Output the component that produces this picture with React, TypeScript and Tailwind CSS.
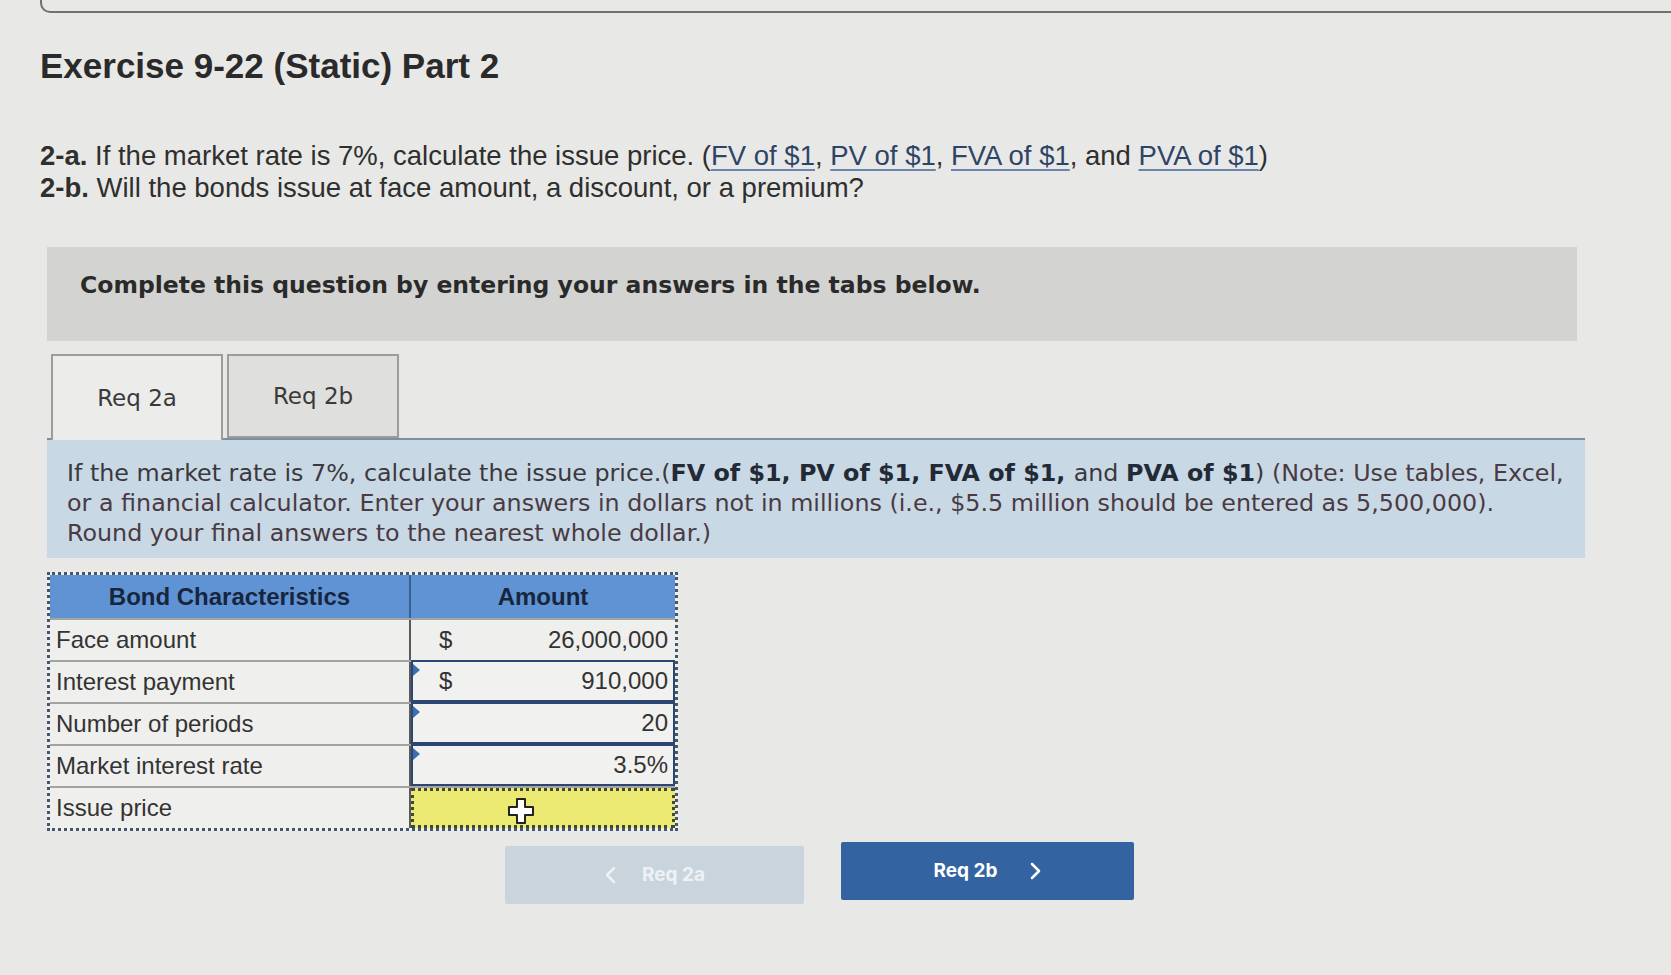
import React from "react";

const Marker = () => (
  <span className="absolute left-0 top-[2px] h-0 w-0 border-y-[6px] border-l-[7px] border-y-transparent border-l-[#3a6fb5]" />
);

const CursorPlus = () => (
  <svg
    width="28"
    height="28"
    viewBox="0 0 28 28"
    className="absolute left-[93px] top-[6px]"
  >
    <path
      d="M10 2h8v8h8v8h-8v8h-8v-8H2v-8h8z"
      fill="#ffffff"
      stroke="#222222"
      strokeWidth="2"
      strokeLinejoin="round"
    />
  </svg>
);

const rows = [
  { label: "Face amount", dollar: true, value: "26,000,000", kind: "plain" },
  { label: "Interest payment", dollar: true, value: "910,000", kind: "input" },
  { label: "Number of periods", dollar: false, value: "20", kind: "input" },
  { label: "Market interest rate", dollar: false, value: "3.5%", kind: "input" },
];

export default function App() {
  return (
    <div className="min-h-screen w-full overflow-hidden bg-[#e8e8e6] pl-[40px] font-['Liberation_Sans',Arial,sans-serif] text-[#333]">
      {/* bottom edge of the previous panel */}
      <div className="-mr-[40px] h-[13px] rounded-bl-[10px] border-b-2 border-l-2 border-[#707070]" />

      <h1 className="mt-[33px] text-[35px] font-bold leading-[40px] text-[#2a2a2a]">
        Exercise 9-22 (Static) Part 2
      </h1>

      <div className="mt-[54px] text-[27.5px] leading-[32px] text-[#2f2f2f]">
        <p className="whitespace-nowrap">
          <span className="font-bold">2-a.</span> If the market rate is 7%, calculate the issue price. (
          <span className="text-[#2e4466] underline decoration-[#6a84ad] underline-offset-4">FV of $1</span>,{" "}
          <span className="text-[#2e4466] underline decoration-[#6a84ad] underline-offset-4">PV of $1</span>,{" "}
          <span className="text-[#2e4466] underline decoration-[#6a84ad] underline-offset-4">FVA of $1</span>, and{" "}
          <span className="text-[#2e4466] underline decoration-[#6a84ad] underline-offset-4">PVA of $1</span>)
        </p>
        <p className="whitespace-nowrap">
          <span className="font-bold">2-b.</span> Will the bonds issue at face amount, a discount, or a premium?
        </p>
      </div>

      <div className="ml-[7px] mt-[43px] h-[94px] w-[1530px] bg-[#d3d3d2] pl-[33px] pt-[23px]">
        <p className="whitespace-nowrap font-['DejaVu_Sans',Verdana,sans-serif] text-[23.5px] font-bold leading-[30px] text-[#2a2a2a]">
          Complete this question by entering your answers in the tabs below.
        </p>
      </div>

      {/* tabs */}
      <div className="ml-[11px] mt-[13px] flex gap-[4px] font-['DejaVu_Sans',Verdana,sans-serif] text-[23px] text-[#3a3a3a]">
        <div className="relative z-10 -mb-[2px] flex h-[86px] w-[172px] items-center justify-center border-2 border-b-0 border-[#9c9c9c] bg-[#ececea]">
          Req 2a
        </div>
        <div className="flex h-[84px] w-[172px] items-center justify-center border-2 border-[#9c9c9c] bg-[#dfdfdd]">
          Req 2b
        </div>
      </div>

      <div className="ml-[7px] w-[1538px] border-t-2 border-[#7d8ea0] bg-[#c8d8e5] pb-[10px] pl-[20px] pt-[18px] font-['DejaVu_Sans',Verdana,sans-serif] text-[23.8px] leading-[30px] text-[#3b383d]">
        <p className="whitespace-nowrap">
          If the market rate is 7%, calculate the issue price.(
          <span className="font-bold text-[#232a36]">FV of $1, PV of $1, FVA of $1, </span>and{" "}
          <span className="font-bold text-[#232a36]">PVA of $1</span>){" "}
          <span className="text-[#4a3a42]">(Note: Use tables, Excel,</span>
        </p>
        <p className="whitespace-nowrap text-[#4a3a42]">
          or a financial calculator. Enter your answers in dollars not in millions (i.e., $5.5 million should be entered as 5,500,000).
        </p>
        <p className="whitespace-nowrap text-[#4a3a42]">Round your final answers to the nearest whole dollar.)</p>
      </div>

      {/* table */}
      <div className="ml-[7px] mt-[14px] w-[631px] border-[3px] border-dotted border-[#46566c] bg-[#efefed] text-[24px] text-[#333]">
        <div className="grid h-[43px] grid-cols-[361px_264px] bg-[#6093d4] font-bold text-[#17263d]">
          <div className="flex items-center justify-center border-r-2 border-[#3d5f8c]">Bond Characteristics</div>
          <div className="flex items-center justify-center">Amount</div>
        </div>

        {rows.map((r) => (
          <div key={r.label} className="grid h-[42px] grid-cols-[361px_264px] border-t-2 border-[#a3a3a3]">
            <div className="flex items-center border-r-2 border-[#5a5a5a] pl-[6px]">{r.label}</div>
            <div
              className={
                r.kind === "input"
                  ? "relative -mt-[2px] flex items-center justify-between border-2 border-[#2b4670] bg-[#f1f1ef] pl-[26px] pr-[5px]"
                  : "relative flex items-center justify-between pl-[28px] pr-[7px]"
              }
            >
              {r.kind === "input" && <Marker />}
              <span>{r.dollar ? "$" : ""}</span>
              <span>{r.value}</span>
            </div>
          </div>
        ))}

        <div className="grid h-[42px] grid-cols-[361px_264px] border-t-2 border-[#a3a3a3]">
          <div className="flex items-center border-r-2 border-[#5a5a5a] pl-[6px]">Issue price</div>
          <div className="relative border-[3px] border-dotted border-[#3d4a3a] bg-[#ebe972]">
            <CursorPlus />
          </div>
        </div>
      </div>

      {/* navigation buttons */}
      <div className="ml-[465px] mt-[11px] flex items-start gap-[37px] font-['Inter',sans-serif] text-[19px] font-bold">
        <button className="mt-[4px] flex h-[58px] w-[299px] items-center justify-center gap-[24px] rounded-[2px] bg-[#c9d4dd] text-[#eef2f6]">
          <svg width="14" height="20" viewBox="0 0 14 20" fill="none" stroke="#eef2f6" strokeWidth="2.5" strokeLinecap="round" strokeLinejoin="round">
            <path d="M10 3L3 10l7 7" />
          </svg>
          <span>Req 2a</span>
        </button>
        <button className="flex h-[58px] w-[293px] items-center justify-center gap-[30px] rounded-[2px] bg-[#3463a2] text-white">
          <span>Req 2b</span>
          <svg width="14" height="20" viewBox="0 0 14 20" fill="none" stroke="#ffffff" strokeWidth="2.5" strokeLinecap="round" strokeLinejoin="round">
            <path d="M4 3l7 7-7 7" />
          </svg>
        </button>
      </div>
    </div>
  );
}
